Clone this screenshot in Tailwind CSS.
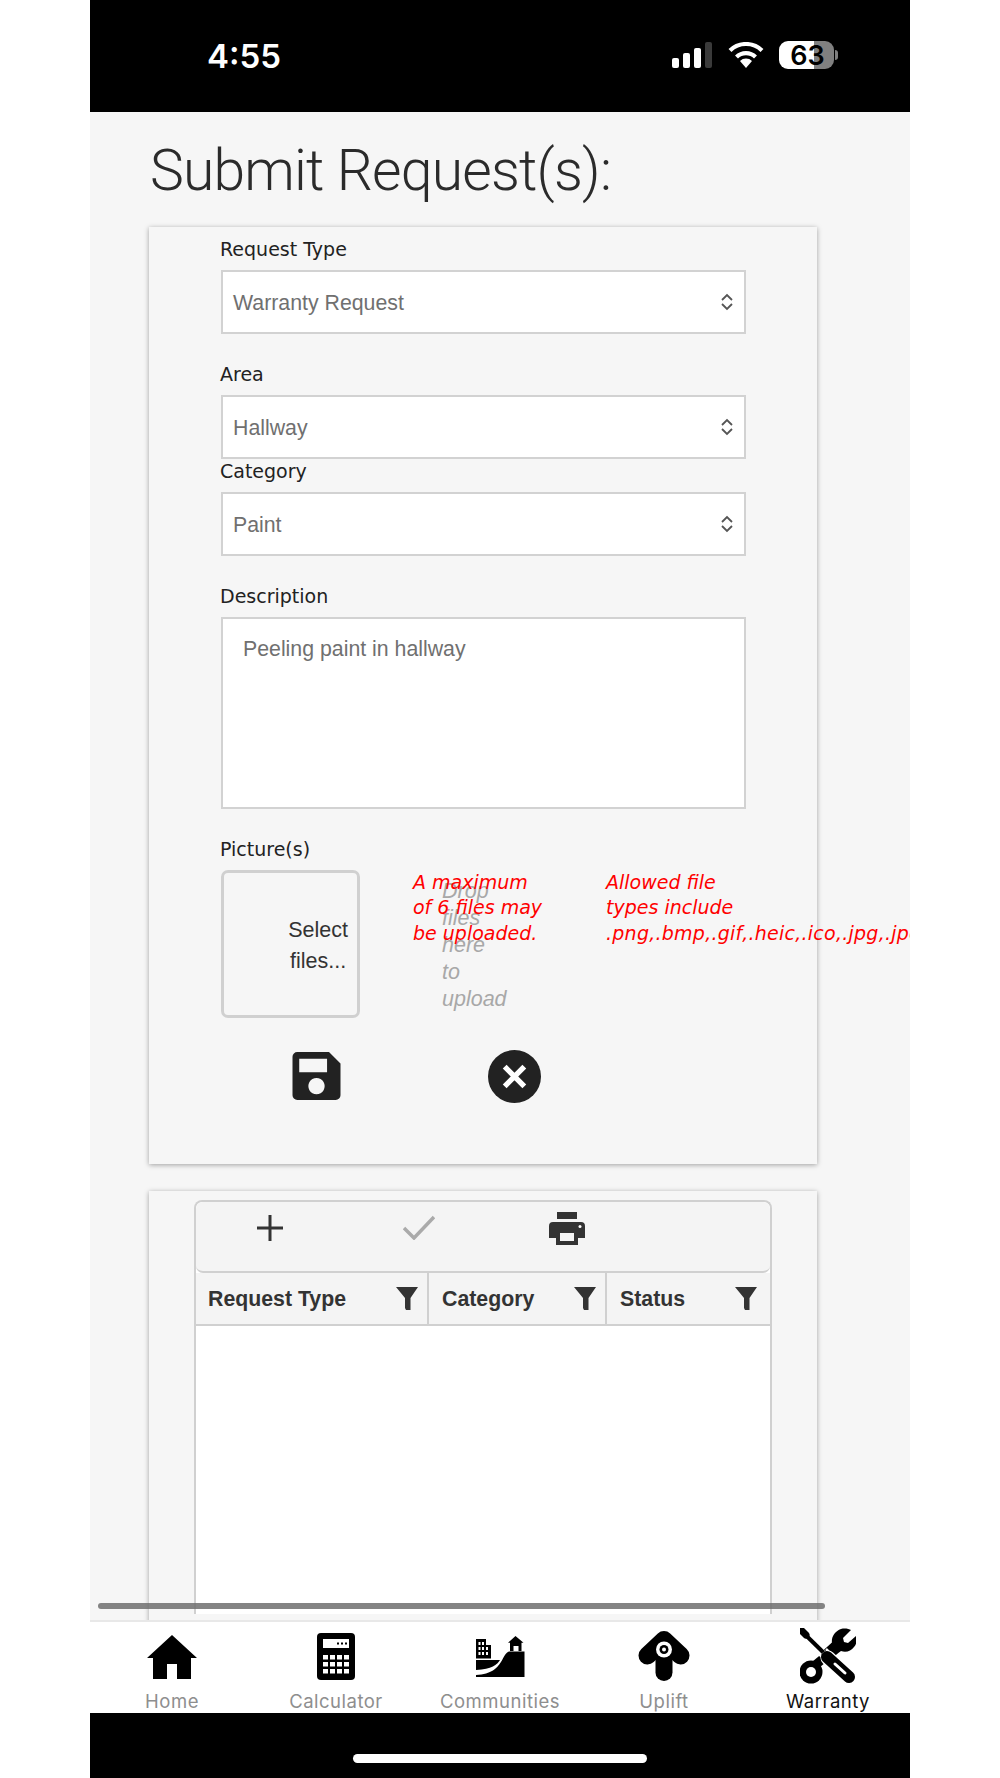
<!DOCTYPE html>
<html>
<head>
<meta charset="utf-8">
<script src="https://cdn.jsdelivr.net/npm/@tailwindcss/browser@4"></script>
</head>
<body class="bg-white">
<div class="ml-[90px] w-[820px] h-[1778px] flex flex-col overflow-hidden font-['Liberation_Sans',sans-serif]">
  <!-- status bar -->
  <header class="h-[112px] shrink-0 bg-black relative">
    <span class="absolute left-[117px] top-[36px] text-[33px] leading-[40px] font-semibold text-white font-['Inter',sans-serif]">4:55</span>
    <div class="absolute left-[582px] top-[42px] w-[42px] h-[26px] flex items-end gap-[4px]">
      <i class="block w-[7px] h-[10px] rounded-[2px] bg-white"></i>
      <i class="block w-[7px] h-[15px] rounded-[2px] bg-white"></i>
      <i class="block w-[7px] h-[20px] rounded-[2px] bg-white"></i>
      <i class="block w-[7px] h-[26px] rounded-[2px] bg-[#3a3a3a]"></i>
    </div>
    <svg class="absolute left-[638px] top-[42px]" width="36" height="26" viewBox="0 0 36 26"><path d="M18 26l-6-7a8.5 8.5 0 0 1 12 0z" fill="#fff"/><path d="M8.5 15a13.5 13.5 0 0 1 19 0" fill="none" stroke="#fff" stroke-width="4.2"/><path d="M2 8.5a23 23 0 0 1 32 0" fill="none" stroke="#fff" stroke-width="4.2"/></svg>
    <div class="absolute left-[689px] top-[41px] w-[55px] h-[28px] rounded-[9px] overflow-hidden flex">
      <div class="w-[35px] bg-white"></div><div class="flex-1 bg-[#808080]"></div>
    </div>
    <span class="absolute left-[690px] top-[41px] w-[55px] h-[28px] text-center text-[27px] leading-[29px] font-semibold text-black font-['Inter',sans-serif]">63</span>
    <i class="absolute left-[745px] top-[50px] block w-[3px] h-[10px] rounded-r-[3px] bg-[#808080]"></i>
  </header>

  <main class="flex-1 min-h-0 bg-[#f6f6f6] relative overflow-hidden pl-[59px]">
    <h1 class="h-[115px] pt-[26px] pl-[1px] text-[57px] leading-[66px] tracking-[-0.8px] font-light text-[#2b2b2b] font-['Roboto',sans-serif]">Submit Request(s):</h1>

    <!-- form card -->
    <section class="w-[668px] h-[937px] bg-[#f6f6f6] shadow-[0_1px_5px_rgba(0,0,0,0.35)] pl-[72px] pt-[10px] relative">
      <label class="block -ml-[1px] h-[33px] text-[19px] leading-[24px] text-[#222] font-['DejaVu_Sans',sans-serif]">Request Type</label>
      <div class="w-[525px] h-[64px] border-[2.5px] border-[#d2d2d2] bg-white flex items-center justify-between pl-[10px] pr-[10px]">
        <span class="text-[21.3px] relative top-[2px] text-[#707070]">Warranty Request</span>
        <svg width="14" height="18" viewBox="0 0 14 18" fill="none" stroke="#555" stroke-width="1.8"><path d="M2 7l5-5 5 5M2 11l5 5 5-5"/></svg>
      </div>
      <label class="block -ml-[1px] h-[61px] pt-[28px] text-[19px] leading-[24px] text-[#222] font-['DejaVu_Sans',sans-serif]">Area</label>
      <div class="w-[525px] h-[64px] border-[2.5px] border-[#d2d2d2] bg-white flex items-center justify-between pl-[10px] pr-[10px]">
        <span class="text-[21.3px] relative top-[2px] text-[#707070]">Hallway</span>
        <svg width="14" height="18" viewBox="0 0 14 18" fill="none" stroke="#555" stroke-width="1.8"><path d="M2 7l5-5 5 5M2 11l5 5 5-5"/></svg>
      </div>
      <label class="block -ml-[1px] h-[33px] text-[19px] leading-[24px] text-[#222] font-['DejaVu_Sans',sans-serif]">Category</label>
      <div class="w-[525px] h-[64px] border-[2.5px] border-[#d2d2d2] bg-white flex items-center justify-between pl-[10px] pr-[10px]">
        <span class="text-[21.3px] relative top-[2px] text-[#707070]">Paint</span>
        <svg width="14" height="18" viewBox="0 0 14 18" fill="none" stroke="#555" stroke-width="1.8"><path d="M2 7l5-5 5 5M2 11l5 5 5-5"/></svg>
      </div>
      <label class="block -ml-[1px] h-[61px] pt-[28px] text-[19px] leading-[24px] text-[#222] font-['DejaVu_Sans',sans-serif]">Description</label>
      <div class="w-[525px] h-[192px] border-[2.5px] border-[#d2d2d2] bg-white pl-[20px] pt-[17px] text-[21.3px] leading-[26px] text-[#707070]">Peeling paint in hallway</div>
      <label class="block -ml-[1px] h-[61px] pt-[28px] text-[19px] leading-[24px] text-[#222] font-['DejaVu_Sans',sans-serif]">Picture(s)</label>

      <!-- upload row -->
      <div class="relative h-[148px]">
        <div class="w-[139px] h-[148px] border-[3px] border-[#d0d0d0] rounded-[7px] flex items-center justify-end pr-[9px]">
          <span class="text-[21.5px] leading-[31px] text-[#333] text-center relative top-[2px]">Select<br>files...</span>
        </div>
        <div class="absolute left-[221px] top-[8px] w-[70px] text-[21.5px] leading-[27px] italic text-[#a8a8a8]">Drop<br>files<br>here<br>to<br>upload</div>
        <div class="absolute left-[192px] top-[0px] text-[19px] leading-[25.3px] italic text-[#ff0000] font-['DejaVu_Sans',sans-serif] whitespace-nowrap">A maximum<br>of 6 files may<br>be uploaded.</div>
        <div class="absolute left-[385px] top-[0px] text-[19px] leading-[25.3px] italic text-[#ff0000] font-['DejaVu_Sans',sans-serif] whitespace-nowrap">Allowed file<br>types include<br><span class="tracking-[0.25px]">.png,.bmp,.gif,.heic,.ico,.jpg,.jpeg</span></div>
      </div>

      <!-- actions -->
      <div class="relative h-[60px] mt-[34px]">
        <svg class="absolute left-[71px] top-[0px]" width="49" height="48" viewBox="0 0 50 50"><path fill-rule="evenodd" fill="#222" d="M5 0h33l12 12v33a5 5 0 0 1-5 5H5a5 5 0 0 1-5-5V5a5 5 0 0 1 5-5zM7 7v14h29V7zM25 27a8.500 8.500 0 1 0 .01 0z"/></svg>
        <svg class="absolute left-[267px] top-[-2px]" width="53" height="53" viewBox="0 0 54 54"><circle cx="27" cy="27" r="27" fill="#222"/><path d="M17 17l20 20M37 17L17 37" stroke="#fff" stroke-width="5.500"/></svg>
      </div>
    </section>

    <!-- grid card -->
    <section class="w-[668px] h-[440px] mt-[27px] bg-[#f6f6f6] shadow-[0_1px_5px_rgba(0,0,0,0.35)] pl-[45px] pt-[9px]">
      <div class="w-[578px] h-[414px] border-x-[2px] border-t-[2px] border-[#d0d0d0] rounded-t-[8px] bg-white flex flex-col">
        <div class="h-[71px] shrink-0 bg-[#f4f4f4] border-b-[2px] border-[#d0d0d0] rounded-[7px] relative">
          <svg class="absolute left-[61px] top-[13px]" width="26" height="26" viewBox="0 0 26 26"><path d="M13 0v26M0 13h26" stroke="#333" stroke-width="3"/></svg>
          <svg class="absolute left-[207px] top-[13px]" width="32" height="25" viewBox="0 0 32 25" fill="none"><path d="M1 13l10 10L31 2" stroke="#aaa" stroke-width="3.500"/></svg>
          <svg class="absolute left-[353px] top-[10px]" width="36" height="33" viewBox="0 0 36 33"><path fill-rule="evenodd" fill="#333" d="M8 0h20v7H8zM4 10h28a4 4 0 0 1 4 4v12h-7v7H7v-7H0V14a4 4 0 0 1 4-4zM11 21v8h14v-8z"/><circle cx="31" cy="14.500" r="1.500" fill="#fff"/></svg>
        </div>
        <div class="h-[53px] shrink-0 bg-[#f4f4f4] border-b-[2px] border-[#d0d0d0] flex text-[21.3px] font-bold text-[#333]">
          <div class="w-[233px] border-r-[2px] border-[#d0d0d0] flex items-center justify-between pl-[12px] pr-[9px]">
            <span class="relative top-[1px]">Request Type</span>
            <svg width="22" height="23" viewBox="0 0 22 23"><path fill="#333" d="M0 0h22l-7.500 11v12h-4.500l-1-2V11z"/></svg>
          </div>
          <div class="w-[178px] border-r-[2px] border-[#d0d0d0] flex items-center justify-between pl-[13px] pr-[9px]">
            <span class="relative top-[1px]">Category</span>
            <svg width="22" height="23" viewBox="0 0 22 23"><path fill="#333" d="M0 0h22l-7.500 11v12h-4.500l-1-2V11z"/></svg>
          </div>
          <div class="flex-1 flex items-center justify-between pl-[13px] pr-[13px]">
            <span class="relative top-[1px]">Status</span>
            <svg width="22" height="23" viewBox="0 0 22 23"><path fill="#333" d="M0 0h22l-7.500 11v12h-4.500l-1-2V11z"/></svg>
          </div>
        </div>
      </div>
    </section>

    <!-- horizontal scrollbar overlay -->
    <div class="absolute left-[8px] top-[1491px] w-[727px] h-[6px] rounded-full bg-[#6e6e6e]/85"></div>
  </main>

  <!-- bottom nav -->
  <nav class="h-[93px] shrink-0 bg-white border-t-[2px] border-[#e8e8e8] grid grid-cols-5 text-[18.5px] tracking-[0.5px] leading-[22px] text-[#8e8e8e] font-['Inter',sans-serif]">
    <a class="flex flex-col items-center">
      <div class="h-[68px] flex items-center pt-[2px]">
        <svg width="50" height="44" viewBox="0 0 50 44"><path fill="#000" d="M0 23L25 0l25 23H44v21H30V29H20v15H6V23z"/></svg>
      </div>
      <span>Home</span>
    </a>
    <a class="flex flex-col items-center">
      <div class="h-[68px] flex items-center pt-[1px]">
        <svg width="38" height="47" viewBox="0 0 38 47"><rect width="38" height="47" rx="4" fill="#000"/><rect x="6" y="6" width="26" height="9" fill="#fff"/><g fill="#000"><rect x="20" y="9.500" width="2" height="2"/><rect x="24" y="9.500" width="2" height="2"/><rect x="28" y="9.500" width="2" height="2"/></g><g fill="#fff"><rect x="6" y="22" width="5" height="4.500"/><rect x="13" y="22" width="5" height="4.500"/><rect x="20" y="22" width="5" height="4.500"/><rect x="27" y="22" width="5" height="4.500"/><rect x="6" y="29" width="5" height="4.500"/><rect x="13" y="29" width="5" height="4.500"/><rect x="20" y="29" width="5" height="4.500"/><rect x="27" y="29" width="5" height="4.500"/><rect x="6" y="36" width="5" height="4.500"/><rect x="13" y="36" width="5" height="4.500"/><rect x="20" y="36" width="5" height="4.500"/><rect x="27" y="36" width="5" height="4.500"/></g></svg>
      </div>
      <span>Calculator</span>
    </a>
    <a class="flex flex-col items-center">
      <div class="h-[68px] flex items-center pt-[1px]">
        <svg width="50" height="42" viewBox="0 0 50 42"><path fill-rule="evenodd" fill="#000" d="M1 3h10v6h5v13.500H1zM3.500 6v3h2V6zM7 6v3h2V6zM3.500 11v3h2v-3zM7 11v3h2v-3zM11 11v3h2v-3zM3.500 16v3h2v-3zM7 16v3h2v-3zM11 16v3h2v-3z"/><path fill="#000" d="M1 24h24c-3 5-8 9-24 10z"/><path fill="#000" d="M1 41v-2c16-1 21-7 25-13 3-5 5-10 8-10.500h15.500V41z"/><path fill="#000" d="M40.500 0l8 6.700h-2V15H35V6.700h-2z"/><rect x="38.500" y="10" width="5" height="5" fill="#fff"/></svg>
      </div>
      <span>Communities</span>
    </a>
    <a class="flex flex-col items-center">
      <div class="h-[68px] flex items-center">
        <svg width="52" height="52" viewBox="0 0 52 52"><path fill="none" stroke="#000" stroke-width="18" stroke-linejoin="round" stroke-linecap="round" d="M9.500 25.500L26 10l16.500 15.500"/><path d="M26 14V42.500" stroke="#000" stroke-width="17" stroke-linecap="round"/><circle cx="26" cy="19.500" r="8" fill="#fff"/><circle cx="26" cy="19.500" r="4.500" fill="#000"/><circle cx="26" cy="19.500" r="2" fill="#fff"/></svg>
      </div>
      <span>Uplift</span>
    </a>
    <a class="flex flex-col items-center text-[#111]">
      <div class="h-[68px] flex items-center">
        <svg width="56" height="56" viewBox="0 0 56 56">
          <circle cx="11" cy="44" r="11.500" fill="#000"/>
          <path d="M13 39L25 29" stroke="#000" stroke-width="9"/>
          <circle cx="11" cy="44" r="5" fill="#fff"/>
          <path d="M27 25l11-10" stroke="#000" stroke-width="9"/>
          <path fill="#000" d="M41 1c4-1 8 0 10 1l-8 8 1 4 4 1 8-7c1 3 1 8-2 11-3 4-8 6-13 4-4 3-6 5-8 5l-5-5c1-3 2-5 4-8-1-6 3-12 9-14z"/>
          <path d="M1.500 3L26 27" stroke="#000" stroke-width="4"/>
          <path d="M2 3l4 4" stroke="#000" stroke-width="7" stroke-linecap="round"/>
          <path d="M18 25l7 7" stroke="#fff" stroke-width="2.500"/>
          <path d="M26 21l6 6" stroke="#fff" stroke-width="2.500"/>
          <path d="M28 30L49 49" stroke="#fff" stroke-width="15" stroke-linecap="round"/>
          <path d="M27 29L49 49" stroke="#000" stroke-width="12" stroke-linecap="round"/>
          <path d="M35 36l10 9" stroke="#fff" stroke-width="3" stroke-linecap="round"/>
        </svg>
      </div>
      <span>Warranty</span>
    </a>
  </nav>

  <!-- home indicator -->
  <footer class="h-[65px] shrink-0 bg-black flex justify-center pt-[41px]">
    <div class="w-[294px] h-[9px] rounded-full bg-white"></div>
  </footer>
</div>
</body>
</html>
